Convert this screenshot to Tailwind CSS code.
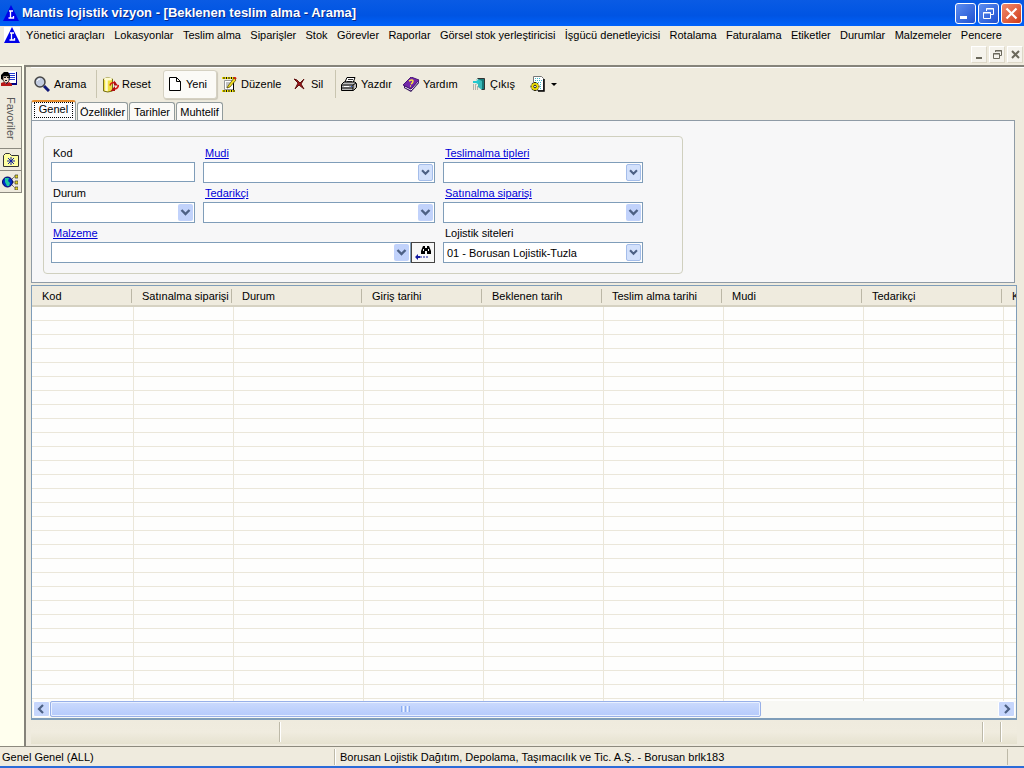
<!DOCTYPE html>
<html lang="tr">
<head>
<meta charset="utf-8">
<title>Mantis lojistik vizyon</title>
<script src="https://cdn.jsdelivr.net/npm/@tailwindcss/browser@4"></script>
</head>
<body class="flex h-screen flex-col overflow-hidden bg-[#efebde] font-['Liberation_Sans',Arial,sans-serif] text-[11px] leading-4 text-black">
<svg class="hidden">
  <symbol id="logo" viewBox="0 0 16 16"><path d="M8 0 16 16H0Z" fill="#0000e8"/><path d="M6 6h4M7.500 6v7M5.500 13h5v-2" fill="none" stroke="#fff" stroke-width="1.300"/></symbol>
  <symbol id="chev" viewBox="0 0 15 17"><path d="m3.500 6 4 4 4-4" fill="none" stroke="#4d6185" stroke-width="2.400"/></symbol>
</svg>

<header class="shrink-0">
  <div class="flex h-[26px] items-center gap-[3px] bg-linear-to-b from-[#0a5be4] via-[#0054e3] via-60% to-[#0062fa] pl-[3px] pr-[2px]">
    <svg class="size-4"><use href="#logo"/></svg>
    <h1 class="flex-1 whitespace-nowrap text-[13px] font-bold text-white [text-shadow:1px_1px_#0a2a8c]">Mantis lojistik vizyon - [Beklenen teslim alma - Arama]</h1>
    <div class="flex gap-[2px]">
      <button aria-label="Simge durumuna küçült" class="size-[21px] rounded-[3px] border border-white bg-linear-to-br from-[#5d8df0] to-[#2050d0]"><svg viewBox="0 0 19 19"><path d="M4 12h7v3H4z" fill="#fff"/></svg></button>
      <button aria-label="Önceki boyut" class="size-[21px] rounded-[3px] border border-white bg-linear-to-br from-[#5d8df0] to-[#2050d0]"><svg viewBox="0 0 19 19" fill="none" stroke="#fff"><path d="M7.500 7V4.500h7v6H12M7 5h8M4.500 8.500h7v6h-7zM4 9h8"/></svg></button>
      <button aria-label="Kapat" class="size-[21px] rounded-[3px] border border-white bg-linear-to-br from-[#f08a6c] to-[#d03810]"><svg viewBox="0 0 19 19"><path d="m4.500 4.500 10 10m0-10-10 10" stroke="#fff" stroke-width="2.200"/></svg></button>
    </div>
  </div>
  <div class="flex h-[18px] items-center gap-[6px] pl-1 pr-[22px]">
    <span class="bg-white"><svg class="size-4"><use href="#logo"/></svg></span>
    <nav class="flex flex-1 justify-between whitespace-nowrap">
      <a href="#">Yönetici araçları</a><a href="#">Lokasyonlar</a><a href="#">Teslim alma</a><a href="#">Siparişler</a><a href="#">Stok</a><a href="#">Görevler</a><a href="#">Raporlar</a><a href="#">Görsel stok yerleştiricisi</a><a href="#">İşgücü denetleyicisi</a><a href="#">Rotalama</a><a href="#">Faturalama</a><a href="#">Etiketler</a><a href="#">Durumlar</a><a href="#">Malzemeler</a><a href="#">Pencere</a>
    </nav>
  </div>
  <div class="flex h-5 items-center justify-end gap-[2px] pr-[1px]">
    <button aria-label="Belgeyi küçült" class="h-[17px] w-4 border border-r-[#ddd8c8] border-b-[#ddd8c8] border-white bg-[#f5f3ec]"><svg viewBox="0 0 14 15"><path d="M4 10h6v2H4z" fill="#6b695c"/></svg></button>
    <button aria-label="Belgeyi geri yükle" class="h-[17px] w-4 border border-r-[#ddd8c8] border-b-[#ddd8c8] border-white bg-[#f5f3ec]"><svg viewBox="0 0 14 15" fill="none" stroke="#6b695c"><path d="M5.500 5V3.500h6v5H10M5 4h7M3.500 6.500h6v5h-6zM3 7h7"/></svg></button>
    <button aria-label="Belgeyi kapat" class="h-[17px] w-4 border border-r-[#ddd8c8] border-b-[#ddd8c8] border-white bg-[#f5f3ec]"><svg viewBox="0 0 14 15"><path d="m4 4 7 7m0-7-7 7" stroke="#6b695c" stroke-width="2"/></svg></button>
  </div>
</header>

<div class="flex min-h-0 flex-1 border-b border-[#8d8a7e]">
  <aside class="w-6 shrink-0 bg-[#ffffee] pt-[2px]">
    <div class="w-[22px] border-r border-[#8c8a80] bg-[#efebde]">
      <button class="flex h-[83px] w-full flex-col items-center gap-[9px] border-b border-t border-[#8c8a80] pt-[4px]">
        <svg class="mr-1 size-[17px] shrink-0" viewBox="0 0 17 17"><path d="M6 1h11v13H6z" fill="#000080"/><path d="M8 0h8v12H8z" fill="#fff"/><path d="M9 2.500h6M9 4.500h6M9 6.500h6M9 8.500h6" stroke="#2038d0"/><path d="M1 4 4 1h4l2 3v4L8 6H4L3 9 1 8Z"/><path d="M3 5h6v5l-2 2H5L3 9Z" fill="#f4e0d0" stroke="#111" stroke-width=".8"/><path d="M4 6.500h2M7 6.500h2M5 9.500h2" stroke="#111"/><path d="M1 15v-3l3-1 2 2 3-2 3 2v2Z" fill="#b81818"/></svg>
        <span class="text-[11px] leading-3 text-[#555] [writing-mode:vertical-rl]">Favoriler</span>
      </button>
      <button aria-label="Favorilere ekle" class="flex h-[22px] w-full items-center border-b border-[#8c8a80] pl-[3px]"><svg class="h-[14px] w-4" viewBox="0 0 16 14"><path d="M.5 13.500v-11l2-2h4l2 2h7v11z" fill="#ffffa0" stroke="#333"/><path d="M8 4v8M4 8h8M5 5l6 6m0-6-6 6" stroke="#1020a0"/></svg></button>
      <button aria-label="Bağlantılar" class="flex h-[22px] w-full items-center border-b border-[#8c8a80] pl-[2px]"><svg class="size-4" viewBox="0 0 16 16"><circle cx="5.500" cy="8" r="5" fill="#0030c8" stroke="#000060"/><path d="M3 4h4L6 7l2 2-1 3H5L3 8Z" fill="#20c8a0"/><path d="M10 5 13 2M11 8h3M10 11l3 3" stroke="#333" stroke-dasharray="1 1"/><path d="M13 1h3v3h-3zM13 7h3v3h-3zM13 13h3v3h-3z" fill="#e8d820" stroke="#333" stroke-width=".7"/></svg></button>
    </div>
  </aside>

  <main class="mt-[1px] flex min-w-0 flex-1 flex-col border-l-2 border-t-2 border-[#85837a] pb-[2px] pl-[5px]">
    <div class="flex h-[33px] items-center whitespace-nowrap border-t border-white">
      <button class="flex h-7 w-[65px] items-center gap-1 pl-[3px]"><svg class="size-4" viewBox="0 0 16 16"><circle cx="6" cy="6" r="5" fill="#c3cce0" stroke="#444" stroke-width="1.500"/><path d="M3 5q1-2 3-2" stroke="#fff" fill="none"/><path d="m10 10 5 5" stroke="#101878" stroke-width="3"/></svg>Arama</button>
      <button class="flex h-7 w-[64px] items-center gap-[3px] border-l border-[#c9c5b0] pl-[5px]"><svg class="size-[17px]" viewBox="0 0 17 17"><path d="M1.500 3q4-3 9 0v12q-5 2-9 0Z" fill="#f0e040" stroke="#77701c"/><path d="M4.500 4v11" stroke="#fffcd0" stroke-width="2.500"/><ellipse cx="6" cy="3" rx="4" ry="1.500" fill="#fffbd0"/><path d="M8 9.500q1-4 5.500-2.500M16.500 9q-1 5-5.500 3.500" stroke="#d81810" stroke-width="1.600" fill="none"/><path d="M12 4.500v5h4ZM13 10v5H8.500Z" fill="#b01010"/></svg>Reset</button>
      <button class="ml-[3px] flex h-[29px] w-[54px] items-center gap-1 rounded-[3px] border border-[#d5d1c2] bg-[#fbfaf6] pl-1 shadow-[1px_1px_1px_#cbc7b8]"><svg class="h-4 w-[14px]" viewBox="0 0 14 16"><path d="M1.500 1.500h7l4 4v9h-11zM8.500 1.500v4h4" fill="#fff" stroke="#000"/></svg>Yeni</button>
      <button class="flex h-7 w-[73px] items-center gap-1 pl-[5px]"><svg class="size-[15px]" viewBox="0 0 15 15"><path d="M0 1h12M0 14h13" stroke="#111" stroke-width="2"/><path d="M0 1h12M0 14h13" stroke="#f0e000" stroke-width="2" stroke-dasharray="1.500 1"/><path d="M2.500 3.500h9v9h-9z" fill="#fff" stroke="#999"/><path d="M11.500 5v8" stroke="#000"/><path d="M4 6h4M4 8h3M4 10h2" stroke="#888"/><path d="m6 9 6-8 2 2-6 7-3 1Z" fill="#f4e020" stroke="#443c00" stroke-width=".7"/><path d="m12 0 2 2" stroke="#d02010" stroke-width="2"/></svg>Düzenle</button>
      <button class="flex h-7 w-[45px] items-center gap-[6px] pl-[3px]"><svg class="size-3" viewBox="0 0 12 12"><path d="m1 1 3 1 3 3 4-4-3 5 3 5-5-4-4 4 3-6Z" fill="#a01418" stroke="#601010"/></svg>Sil</button>
      <button class="flex h-7 w-[63px] items-center gap-1 border-l border-[#c9c5b0] pl-[5px]"><svg class="h-[15px] w-4" viewBox="0 0 16 15"><path d="m4 5 2-4.500h8L12 6Z" fill="#fff" stroke="#000"/><path d="m7 2.500h5M6 4.500h5" stroke="#333"/><path d="M.5 7.500 3 5h11l1.500 1.500v4l-3 3h-12Z" fill="#bbb" stroke="#000"/><path d="M1 8h11l3-2M1 11h11M12 8v5" stroke="#000" fill="none"/><path d="M3 9.500h5" stroke="#fff"/><path d="M10 9.500h1" stroke="#2050e0"/></svg>Yazdır</button>
      <button class="flex h-7 w-[67px] items-center gap-[3px] pl-[5px]"><svg class="h-[15px] w-[17px]" viewBox="0 0 17 15"><path d="M1 8v3l7 4 8-9V4Z" fill="#381860"/><path d="m2 10 6 3 7-8" fill="none" stroke="#fff"/><path d="m0 8 8-8 8 3-8 9Z" fill="#7428a8" stroke="#4a1878"/><path d="M6 4q4-2 4 0T8 7M7 9h1" fill="none" stroke="#f8e840" stroke-width="1.500"/></svg>Yardım</button>
      <button class="flex h-7 w-[58px] items-center gap-[5px] pl-2"><svg class="size-3 shrink-0" viewBox="0 0 12 12"><path d="M4.500.500h7v11h-3" fill="#147878" stroke="#333"/><path d="m5 1 4 2v9l-4-3Z" fill="#38b8b8"/><path d="M0 3h4l-1-2 4 3-4 3 1-2H0Z" fill="#22c8d0"/><path d="M0 7h4M0 9h5M0 11h6" stroke="#777" stroke-dasharray="1 1"/></svg>Çıkış</button>
      <button aria-label="Ayarlar" class="flex h-7 items-center gap-[6px] pl-[7px]"><svg class="h-4 w-[15px]" viewBox="0 0 15 16"><path d="M3.500.500h8l2 2v12h-10z" fill="#fff" stroke="#777"/><path d="M5 2.500h6M5 4.500h7M6 6.500h6M10 8.500h2M10 10.500h2M10 12.500h2" stroke="#40b8c8" stroke-dasharray="1 1"/><path d="M14 3v12H8" stroke="#000" stroke-width="1.500" fill="none"/><path d="M5 6v9M.5 10.500h9M2 7.500l6 6M8 7.500l-6 6" stroke="#332e00" stroke-width="2"/><circle cx="5" cy="10.500" r="3.500" fill="#f0e000"/><circle cx="5" cy="10.500" r="1.300" fill="#fff" stroke="#222"/></svg><svg class="h-[3px] w-[6px]" viewBox="0 0 6 3"><path d="M0 0h6L3 3Z"/></svg></button>
    </div>

    <div role="tablist" class="flex h-5 shrink-0 items-end gap-[1px]">
      <button role="tab" aria-selected="true" class="h-5 w-[45px] rounded-t-[3px] border-x border-t-2 border-x-[#919b9c] border-t-[#e68b2c] bg-[#fcfcfe] px-[2px] pb-[2px]"><span class="block h-4 border border-dotted border-black leading-[13px]">Genel</span></button>
      <button role="tab" class="h-[18px] w-[51px] rounded-t-[3px] border border-b-0 border-[#919b9c] bg-[#fbfaf7] whitespace-nowrap">Özellikler</button>
      <button role="tab" class="h-[18px] w-[46px] rounded-t-[3px] border border-b-0 border-[#919b9c] bg-[#fbfaf7]">Tarihler</button>
      <button role="tab" class="h-[18px] w-[47px] rounded-t-[3px] border border-b-0 border-[#919b9c] bg-[#fbfaf7]">Muhtelif</button>
    </div>

    <section class="mr-[9px] border border-[#8f9ba6] bg-[#f7f7f8] px-[11px] pt-[15px] pb-2">
      <form class="grid w-[640px] grid-cols-[144px_232px_200px] gap-x-2 rounded-[4px] border border-[#d0d0bf] px-[7px] pt-[8px] pb-[8px]">
        <div class="h-10"><label for="kod" class="block h-[17px] pl-[2px]">Kod</label><input id="kod" class="block h-5 w-full border border-[#7f9db9] bg-white px-1"></div>
        <div class="h-10"><a href="#" id="l1" class="block h-[17px] pl-[2px] text-[#0000d8] underline">Mudi</a><div class="relative"><select aria-labelledby="l1" class="block h-[21px] w-full appearance-none border border-[#7f9db9] bg-white px-[3px]"><option></option></select><svg class="pointer-events-none absolute top-[2px] right-[2px] h-[17px] w-[15px] rounded-[2px] border border-[#a4bdea] bg-[#d3e1fc]"><use href="#chev"/></svg></div></div>
        <div class="h-10"><a href="#" id="l2" class="block h-[17px] pl-[2px] text-[#0000d8] underline">Teslimalma tipleri</a><div class="relative"><select aria-labelledby="l2" class="block h-[21px] w-full appearance-none border border-[#7f9db9] bg-white px-[3px]"><option></option></select><svg class="pointer-events-none absolute top-[2px] right-[2px] h-[17px] w-[15px] rounded-[2px] border border-[#a4bdea] bg-[#d3e1fc]"><use href="#chev"/></svg></div></div>
        <div class="h-10"><label for="durum" class="block h-[17px] pl-[2px]">Durum</label><div class="relative"><select id="durum" class="block h-[21px] w-full appearance-none border border-[#7f9db9] bg-white px-[3px]"><option></option></select><svg class="pointer-events-none absolute top-[2px] right-[2px] h-[17px] w-[15px] rounded-[2px] bg-[#c1d2fb]"><use href="#chev"/></svg></div></div>
        <div class="h-10"><a href="#" id="l3" class="block h-[17px] pl-[2px] text-[#0000d8] underline">Tedarikçi</a><div class="relative"><select aria-labelledby="l3" class="block h-[21px] w-full appearance-none border border-[#7f9db9] bg-white px-[3px]"><option></option></select><svg class="pointer-events-none absolute top-[2px] right-[2px] h-[17px] w-[15px] rounded-[2px] bg-[#c1d2fb]"><use href="#chev"/></svg></div></div>
        <div class="h-10"><a href="#" id="l4" class="block h-[17px] pl-[2px] text-[#0000d8] underline">Satınalma siparişi</a><div class="relative"><select aria-labelledby="l4" class="block h-[21px] w-full appearance-none border border-[#7f9db9] bg-white px-[3px]"><option></option></select><svg class="pointer-events-none absolute top-[2px] right-[2px] h-[17px] w-[15px] rounded-[2px] bg-[#c1d2fb]"><use href="#chev"/></svg></div></div>
        <div class="col-span-2 h-10"><a href="#" id="l5" class="block h-[17px] w-fit pl-[2px] text-[#0000d8] underline">Malzeme</a><div class="flex"><div class="relative flex-1"><select aria-labelledby="l5" class="block h-[21px] w-full appearance-none border border-[#7f9db9] bg-white px-[3px]"><option></option></select><svg class="pointer-events-none absolute top-[2px] right-[2px] h-[17px] w-[15px] rounded-[2px] bg-[#c1d2fb]"><use href="#chev"/></svg></div><button type="button" aria-label="Malzeme ara" class="flex h-[21px] w-6 items-center justify-center border border-[#444] bg-[#f7f7f7]"><svg class="h-[15px] w-4" viewBox="0 0 16 15"><path d="M6 9V6l2-5h2v2h2V1h2l2 5v3h-4V6h-2v3Z" fill="#000"/><path d="M8.500 4v2M13.500 4v2" stroke="#fff"/><path d="M3 9 0 12l3 3v-2h2v-2H3Z" fill="#1018a0"/><path d="M5 12h8" stroke="#1018a0" stroke-dasharray="2 1"/></svg></button></div></div>
        <div class="h-10"><label for="site" class="block h-[17px] pl-[2px]">Lojistik siteleri</label><div class="relative"><select id="site" class="block h-[21px] w-full appearance-none border border-[#7f9db9] bg-white px-[3px]"><option>01 - Borusan Lojistik-Tuzla</option></select><svg class="pointer-events-none absolute top-[2px] right-[2px] h-[17px] w-[15px] rounded-[2px] border border-[#a4bdea] bg-[#d3e1fc]"><use href="#chev"/></svg></div></div>
      </form>
    </section>

    <section class="mt-[2px] mr-[7px] flex min-h-0 flex-1 flex-col border border-b-2 border-[#7f9db9] bg-[#fefefd]">
      <div class="min-h-0 flex-1 overflow-hidden">
        <table class="w-full table-fixed border-separate border-spacing-0">
          <colgroup><col class="w-[102px]"><col class="w-[100px]"><col class="w-[130px]"><col class="w-[120px]"><col class="w-[120px]"><col class="w-[120px]"><col class="w-[140px]"><col class="w-[140px]"><col></colgroup>
          <thead><tr id="head"></tr></thead>
          <tbody id="rows"></tbody>
        </table>
      </div>
      <div role="scrollbar" aria-label="Yatay kaydırma" aria-controls="rows" aria-valuenow="0" class="flex h-[17px] shrink-0 bg-[#f8f8f4] px-[1px]">
        <button aria-label="Sola" class="h-4 w-[17px] rounded-[2px] border border-white bg-[#c6d6fc]"><svg viewBox="0 0 15 14"><path d="m9 3-4 4 4 4" fill="none" stroke="#4d6185" stroke-width="2.200"/></svg></button>
        <div class="flex-1"><div class="flex h-4 w-[75%] items-center justify-center gap-[1px] rounded-[2px] border border-[#98b0e8] bg-linear-to-b from-[#cbdafd] to-[#b5cafb] shadow-[inset_0_0_0_1px_#e8f0ff]"><i class="h-[6px] w-[1px] bg-[#8caef0]"></i><i class="h-[6px] w-[1px] bg-[#eef4fe]"></i><i class="h-[6px] w-[1px] bg-[#8caef0]"></i><i class="h-[6px] w-[1px] bg-[#eef4fe]"></i><i class="h-[6px] w-[1px] bg-[#8caef0]"></i></div></div>
        <button aria-label="Sağa" class="h-4 w-[17px] rounded-[2px] border border-white bg-[#c6d6fc]"><svg viewBox="0 0 15 14"><path d="m6 3 4 4-4 4" fill="none" stroke="#4d6185" stroke-width="2.200"/></svg></button>
      </div>
    </section>

    <div class="mr-[7px] flex h-6 shrink-0 items-center bg-linear-to-b from-[#efebde] via-[#f0ecdf] to-[#e6e2d0]">
      <span class="h-5 w-[249px] border-r border-[#bdb9a8]"></span><span class="h-5 flex-1 border-l border-r border-l-white border-r-[#bdb9a8]"></span><span class="h-5 w-[18px] border-l border-r border-l-white border-r-[#bdb9a8]"></span><span class="h-5 w-4 border-l border-white"></span>
    </div>
  </main>
</div>

<footer class="flex h-[21px] shrink-0 items-center border-b-2 border-[#2b6bd8] whitespace-nowrap text-[11px]">
  <span class="w-[335px] border-r border-[#bdb9a8] pl-[2px]">Genel Genel (ALL)</span>
  <span class="flex-1 border-l border-white pl-1">Borusan Lojistik Dağıtım, Depolama, Taşımacılık ve Tic. A.Ş. - Borusan brlk183</span>
  <span class="w-[17px] border-l border-[#bdb9a8]">&nbsp;</span>
</footer>

<script>
  const heads = ['Kod', 'Satınalma siparişi', 'Durum', 'Giriş tarihi', 'Beklenen tarih', 'Teslim alma tarihi', 'Mudi', 'Tedarikçi', 'K'];
  document.getElementById('head').innerHTML = heads.map((h, i) =>
    `<th class="h-[21px] overflow-hidden border-b-2 border-[#d6d2c2] bg-[#efebde] p-0 text-left font-normal whitespace-nowrap"><span class="block border-[#bbb7a6] leading-[14px] ${i < 8 ? 'mr-[2px] border-r' : ''} ${i ? 'pl-2' : 'pl-[10px]'}">${h}</span></th>`).join('');
  document.getElementById('rows').innerHTML = Array.from({ length: 30 }, () =>
    '<tr>' + '<td class="h-[14px] border-r border-b border-[#ebe7da] p-0 last:border-r-0"></td>'.repeat(9) + '</tr>').join('');
</script>
</body>
</html>
